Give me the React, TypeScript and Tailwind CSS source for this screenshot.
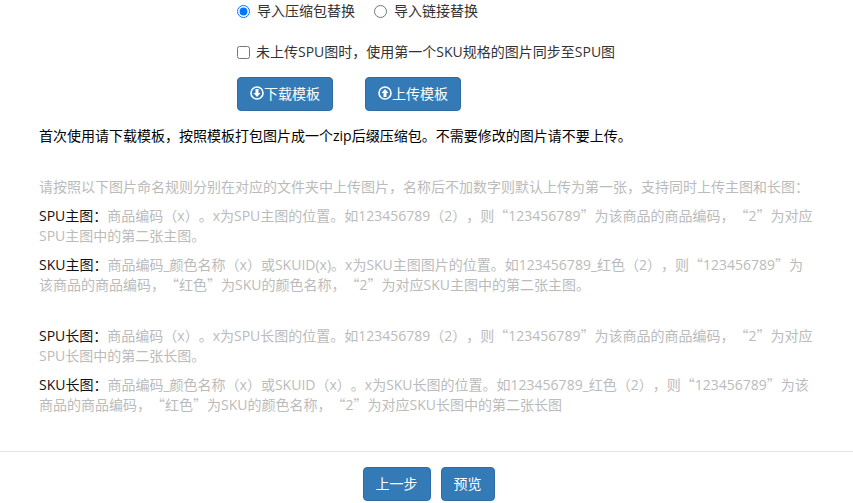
import React from 'react';

const cjk = '"Noto Sans CJK SC", "Liberation Sans", sans-serif';

const rules = [
  { label: 'SPU主图：', text: '商品编码（x）。x为SPU主图的位置。如123456789（2），则“123456789”为该商品的商品编码，“2”为对应SPU主图中的第二张主图。' },
  { label: 'SKU主图：', text: '商品编码_颜色名称（x）或SKUID(x)。x为SKU主图图片的位置。如123456789_红色（2），则“123456789”为该商品的商品编码，“红色”为SKU的颜色名称，“2”为对应SKU主图中的第二张主图。' },
];
const rules2 = [
  { label: 'SPU长图：', text: '商品编码（x）。x为SPU长图的位置。如123456789（2），则“123456789”为该商品的商品编码，“2”为对应SPU长图中的第二张长图。' },
  { label: 'SKU长图：', text: '商品编码_颜色名称（x）或SKUID（x）。x为SKU长图的位置。如123456789_红色（2），则“123456789”为该商品的商品编码，“红色”为SKU的颜色名称，“2”为对应SKU长图中的第二张长图' },
];

// latin runs get their own font, the CJK font's digits are too narrow here
function Mixed({ text }: { text: string }) {
  return (
    <>
      {text.split(/([A-Za-z0-9_()]+)/).map((part, i) =>
        i % 2 === 1 ? <span key={i} className="font-['Open_Sans'] leading-none">{part}</span> : part
      )}
    </>
  );
}

function Rule({ label, text }: { label: string; text: string }) {
  return (
    <p className="mb-[9px] leading-[20px]">
      <span className="text-[#111]"><Mixed text={label} /></span>
      <span className="text-[#bbb]"><Mixed text={text} /></span>
    </p>
  );
}

// white ring with an arrow inside, like the bootstrap circle-arrow glyph
function CircleIcon({ up }: { up?: boolean }) {
  return (
    <svg width="14" height="14" viewBox="0 0 14 14" className={up ? 'rotate-180' : ''}>
      <circle cx="7" cy="7" r="6" fill="none" stroke="#fff" strokeWidth="1.6" />
      <path d="M5.5 3h3v4h2L7 11 3.5 7h2z" fill="#fff" />
    </svg>
  );
}

export default function App() {
  return (
    <div lang="zh-CN" className="flex h-[503px] w-[853px] flex-col overflow-hidden bg-white text-[14px] [font-feature-settings:'chws'_0,'halt'_0,'palt'_0] [text-spacing-trim:space-all]" style={{ fontFamily: cjk }}>
      <div className="flex-1 pl-[39px] pr-[39px]">
        <div className="pl-[198px] text-[#333]">
          <div className="flex h-[22px] items-center">
            <label className="flex items-center">
              <input type="radio" name="mode" defaultChecked className="mr-[7px] h-[13px] w-[13px] accent-[#0075ff]" />
              <span className="pb-[2px]">导入压缩包替换</span>
            </label>
            <label className="ml-[19px] flex items-center">
              <input type="radio" name="mode" className="mr-[7px] h-[13px] w-[13px]" />
              <span className="pb-[2px]">导入链接替换</span>
            </label>
          </div>
          <label className="mt-[19px] flex h-[23px] items-center">
            <input type="checkbox" className="mr-[6px] h-[13px] w-[13px]" />
            <span className="pb-[2px]"><Mixed text="未上传SPU图时，使用第一个SKU规格的图片同步至SPU图" /></span>
          </label>
          <div className="mt-[13px] flex gap-[32px]">
            <button className="flex h-[34px] w-[96px] items-center justify-center rounded-[4px] border border-[#2e6da4] bg-[#337ab7] pb-[2px] text-white">
              <CircleIcon />下载模板
            </button>
            <button className="flex h-[34px] w-[96px] items-center justify-center rounded-[4px] border border-[#2e6da4] bg-[#337ab7] pb-[2px] text-white">
              <CircleIcon up />上传模板
            </button>
          </div>
        </div>
        <p className="mt-[14px] leading-[20px] text-black"><Mixed text="首次使用请下载模板，按照模板打包图片成一个zip后缀压缩包。不需要修改的图片请不要上传。" /></p>
        <p className="mt-[31px] mb-[9px] leading-[20px] text-[#bbb]">请按照以下图片命名规则分别在对应的文件夹中上传图片，名称后不加数字则默认上传为第一张，支持同时上传主图和长图：</p>
        {rules.map(r => <Rule key={r.label} {...r} />)}
        <div className="h-[22px]" />
        {rules2.map(r => <Rule key={r.label} {...r} />)}
      </div>
      <div className="flex h-[52px] justify-center gap-[10px] border-t border-[#e5e5e5] pl-[4px] pt-[15px]">
        <button className="h-[34px] w-[68px] rounded-[4px] border border-[#2e6da4] bg-[#337ab7] pb-[2px] text-white">上一步</button>
        <button className="h-[34px] w-[54px] rounded-[4px] border border-[#2e6da4] bg-[#337ab7] pb-[2px] text-white">预览</button>
      </div>
    </div>
  );
}
